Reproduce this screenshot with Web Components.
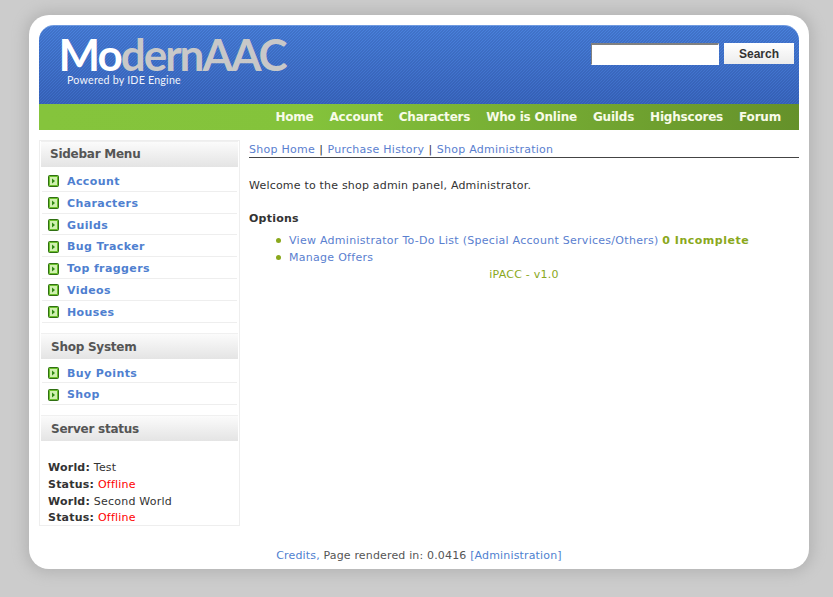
<!DOCTYPE html>
<html><head><meta charset="utf-8"><title>ModernAAC</title>
<style>
html,body{margin:0;padding:0;height:597px;overflow:hidden;background:#ccc}
body{font:11px "DejaVu Sans",Verdana,sans-serif;color:#333}
</style></head><body>
<aac-shell>
  <aac-header></aac-header>
  <aac-nav></aac-nav>
  <aac-main>
    <aac-sidebar slot="side">
      <aac-panel heading="Sidebar Menu">
        <aac-item>Account</aac-item><aac-item>Characters</aac-item><aac-item>Guilds</aac-item><aac-item>Bug Tracker</aac-item><aac-item>Top fraggers</aac-item><aac-item>Videos</aac-item><aac-item>Houses</aac-item>
      </aac-panel>
      <aac-panel heading="Shop System">
        <aac-item>Buy Points</aac-item><aac-item>Shop</aac-item>
      </aac-panel>
      <aac-panel heading="Server status" last>
        <aac-status></aac-status>
      </aac-panel>
    </aac-sidebar>
    <aac-content slot="body"></aac-content>
  </aac-main>
  <aac-footer></aac-footer>
</aac-shell>
<script>
function def(name,html,init){
  customElements.define(name,class extends HTMLElement{
    constructor(){super();this.attachShadow({mode:'open'}).innerHTML=html;}
    connectedCallback(){if(init)init(this);}
  });
}
def('aac-shell',`<style>
:host{display:block;box-sizing:border-box;width:780px;height:554px;margin:15px 0 0 29px;padding:10px;background:#fff;border-radius:20px;box-shadow:0 0 14px 4px #b4b4b4}
</style><slot></slot>`);
def('aac-header',`<style>
:host{display:flex;justify-content:space-between;box-sizing:border-box;width:760px;height:79px;border-radius:15px 15px 0 0;border-top:1px solid #6f9ae0;
background:linear-gradient(135deg,rgba(10,30,90,.14) 0 25%,transparent 25% 50%,rgba(10,30,90,.14) 50% 75%,transparent 75%) 0 0/3px 3px,linear-gradient(#4a82dd,#3c6ac4);}
.logo{padding:8px 0 0 19.500px;color:#c8c8c8;font:700 44px/40px Lato,sans-serif;letter-spacing:-2px;white-space:nowrap}
.logo b{color:#fff;font-weight:700}
.sub{color:#f0f3fa;font:10.7px/13px "Lato",sans-serif;margin:-1px 0 0 8px;letter-spacing:.2px;padding-left:20px;white-space:nowrap}
form{display:flex;gap:5px;margin:17px 5px 0 0;align-items:flex-start}
input{box-sizing:border-box;width:128px;height:22px;margin:0;padding:0;background:#fff;border:1px solid #fff;border-top:2px solid #808080;border-left:1px solid #808080;outline:0}
button{box-sizing:border-box;width:70px;height:21px;border:0;padding:0;background:linear-gradient(#fff,#ececec);color:#333;font:bold 12px "Liberation Sans",sans-serif}
</style><div><div class="logo"><b>Mo</b>dernAAC</div><div class="sub">Powered by IDE Engine</div></div>
<form onsubmit="return false"><input type="text"><button>Search</button></form>`);
def('aac-nav',`<style>
:host{display:flex;justify-content:flex-end;gap:16px;box-sizing:border-box;width:760px;height:26px;padding-right:18px;background:linear-gradient(90deg,#85c43c 0,#84c33b 35%,#65912a 100%);color:#f8fbe8;font:bold 12px/26px "DejaVu Sans",sans-serif}
span{letter-spacing:-.2px}
</style><span>Home</span><span>Account</span><span>Characters</span><span>Who is Online</span><span>Guilds</span><span>Highscores</span><span>Forum</span>`);
def('aac-main',`<style>
:host{display:flex;gap:9px;padding-top:10px;height:386px}
</style><slot name="side"></slot><slot name="body"></slot>`);
def('aac-sidebar',`<style>
:host{display:block;box-sizing:border-box;width:201px;height:386px;border:1px solid #eee;flex:none}
</style><slot></slot>`);
def('aac-panel',`<style>
:host{display:block;margin-bottom:10px}
:host([last]){margin-bottom:0}
h3{box-sizing:border-box;height:26px;margin:0 1px;padding-left:10px;border-top:1px solid #f0f0f0;background:linear-gradient(#fbfbfb,#e4e4e4);color:#555;font:bold 12px/26px "DejaVu Sans",sans-serif;letter-spacing:-.25px}
:host(:first-child) h3{line-height:25px;padding-left:9px}
.b{padding:3px 2px 0}
</style><h3></h3><div class="b"><slot></slot></div>`,el=>{el.shadowRoot.querySelector('h3').textContent=el.getAttribute('heading')});
def('aac-item',`<style>
:host{display:flex;align-items:center;gap:8px;box-sizing:border-box;height:21.8px;padding-left:6px;padding-top:2.2px;border-bottom:1px solid #eee;color:#4f7fd0;font:bold 11px "DejaVu Sans",sans-serif;letter-spacing:.4px}
svg{flex:none}
</style><svg width="11" height="12" viewBox="0 0 11 12"><rect x=".5" y=".5" width="10" height="11" rx="1" fill="#6cc02c" stroke="#2f6f12"/><rect x="2" y="2" width="7" height="8" fill="#d0f0b0"/><path d="M4 3.5l3 2.5L4 8.500z" fill="#2f8a12"/></svg><slot></slot>`);
def('aac-status',`<style>
:host{display:block;padding:16px 6px 0;font:11px/16.7px "DejaVu Sans",sans-serif;color:#333;letter-spacing:.22px}
b{color:#333}i{font-style:normal;color:#f00}
</style><b>World:</b> Test<br><b>Status:</b> <i>Offline</i><br><b>World:</b> Second World<br><b>Status:</b> <i>Offline</i>`);
def('aac-content',`<style>
:host{display:block;width:550px;font:11px/17px "DejaVu Sans",sans-serif;color:#333;letter-spacing:.28px}
a{color:#5a80cf}
.tabs{border-bottom:1px solid #444;height:16px;padding-top:1px;letter-spacing:.26px}
.tabs span{color:#333;margin:0 .5px}
p{margin:0}
.w{margin-top:19px;letter-spacing:.2px}
.o{margin-top:16px;font-weight:bold;letter-spacing:.24px}
ul{margin:5px 0 0;padding:0 0 0 40px;list-style:none}
li{height:17px;position:relative}
li::before{content:"";position:absolute;left:-13px;top:6px;width:5px;height:5px;border-radius:50%;background:#8aa81c}
.i{color:#8aa81c;font-weight:bold;letter-spacing:.5px}
.v{text-align:center;color:#8aa81c;letter-spacing:.24px}
</style><div class="tabs"><a>Shop Home</a> <span>|</span> <a>Purchase History</a> <span>|</span> <a>Shop Administration</a></div>
<p class="w">Welcome to the shop admin panel, Administrator.</p>
<p class="o">Options</p>
<ul><li><a>View Administrator To-Do List (Special Account Services/Others)</a> <span class="i">0 Incomplete</span></li><li><a>Manage Offers</a></li></ul>
<div class="v">iPACC - v1.0</div>`);
def('aac-footer',`<style>
:host{display:block;padding-top:21px;text-align:center;font:11px/17px "DejaVu Sans",sans-serif;color:#555;letter-spacing:.16px}
a{color:#4f7fd0}
</style><a>Credits,</a> Page rendered in: 0.0416 <a>[Administration]</a>`);
</script>
</body></html>
